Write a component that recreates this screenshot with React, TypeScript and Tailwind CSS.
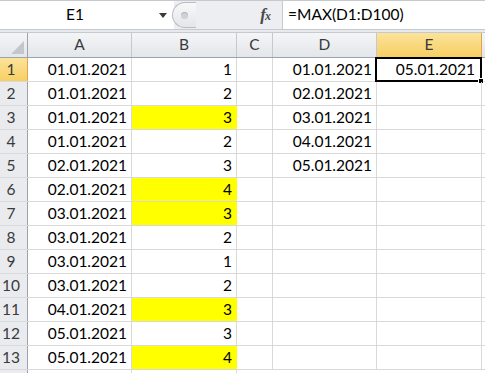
import * as React from "react";

const ROWS: { a: string; b: number; hi?: boolean; d?: string; e?: string }[] = [
  { a: "01.01.2021", b: 1, d: "01.01.2021", e: "05.01.2021" },
  { a: "01.01.2021", b: 2, d: "02.01.2021" },
  { a: "01.01.2021", b: 3, hi: true, d: "03.01.2021" },
  { a: "01.01.2021", b: 2, d: "04.01.2021" },
  { a: "02.01.2021", b: 3, d: "05.01.2021" },
  { a: "02.01.2021", b: 4, hi: true },
  { a: "03.01.2021", b: 3, hi: true },
  { a: "03.01.2021", b: 2 },
  { a: "03.01.2021", b: 1 },
  { a: "03.01.2021", b: 2 },
  { a: "04.01.2021", b: 3, hi: true },
  { a: "05.01.2021", b: 3 },
  { a: "05.01.2021", b: 4, hi: true },
];

const COLS = [
  { key: "A", w: "w-[104px]" },
  { key: "B", w: "w-[105px]" },
  { key: "C", w: "w-[36px]" },
  { key: "D", w: "w-[104px]" },
  { key: "E", w: "w-[105px]" },
];

function FormulaBar() {
  return (
    <div className="flex h-[30px] border-t border-b border-[#c6c9ce] bg-white">
      {/* Name box */}
      <div className="relative flex w-[174px] flex-none items-center justify-center">
        <span className="pr-[24px] text-[15.5px]">E1</span>
        <span className="absolute right-[7px] top-[12px] h-0 w-0 border-x-[4px] border-t-[5px] border-x-transparent border-t-[#3a3a3a]" />
      </div>
      {/* splitter + fx */}
      <div className="flex w-[108px] flex-none items-center bg-[#eceef1]">
        <div className="-ml-[2px] flex h-[26px] w-[24px] items-center justify-center rounded-l-full border border-r-0 border-[#b9bdc3] bg-gradient-to-b from-[#f7f8f9] to-[#e3e6ea]">
          <span className="h-[7px] w-[7px] rounded-full bg-[#cfd3d8] shadow-[inset_0_1px_1px_#aeb3b9]" />
        </div>
        <div className="flex-1" />
        <span className="mr-[12px] font-['Liberation_Serif',serif] text-[17px] font-bold italic tracking-[-1px] text-[#4a4a4a]">
          f<span className="text-[12px]">x</span>
        </span>
      </div>
      {/* Formula input */}
      <div className="flex flex-1 items-center border-l border-[#c6c9ce] pl-[5px] text-[15.5px]">
        =MAX(D1:D100)
      </div>
    </div>
  );
}

function HeaderRow() {
  return (
    <div className="flex h-[25px] border-b border-[#9da3ab]">
      <div className="relative w-[28px] flex-none border-r border-[#9da3ab] bg-gradient-to-b from-[#f4f5f7] to-[#e3e6ea]">
        <span className="absolute bottom-[3px] right-[3px] h-0 w-0 border-b-[13px] border-l-[13px] border-b-[#c3c7cc] border-l-transparent" />
      </div>
      {COLS.map((c) =>
        c.key === "E" ? (
          <div
            key={c.key}
            className={`${c.w} flex flex-none items-center justify-center border-r border-[#e0a54a] bg-gradient-to-b from-[#fbe39a] to-[#f7cf62] text-[#3a3a3a]`}
          >
            {c.key}
          </div>
        ) : (
          <div
            key={c.key}
            className={`${c.w} flex flex-none items-center justify-center border-r border-[#c5c9ce] bg-gradient-to-b from-[#f4f5f7] to-[#e3e6ea] text-[#3a3a3a]`}
          >
            {c.key}
          </div>
        ),
      )}
      <div className="flex-1 bg-gradient-to-b from-[#f4f5f7] to-[#e3e6ea]" />
    </div>
  );
}

function Cell({
  w,
  children,
  yellow,
}: {
  w: string;
  children?: React.ReactNode;
  yellow?: boolean;
}) {
  return (
    <div
      className={`${w} flex flex-none items-center justify-end border-r pr-[4px] ${
        yellow ? "border-[#ffff00] bg-[#ffff00]" : "border-[#d9d9d9] bg-white"
      }`}
    >
      {children}
    </div>
  );
}

export default function App() {
  return (
    <div className="h-[373px] w-[485px] overflow-hidden bg-white font-['Lato','Liberation_Sans',sans-serif] text-[15.5px] text-black">
      <FormulaBar />
      <div className="h-[3px] border-b border-[#c6c9ce] bg-[#e6e9ed]" />
      <HeaderRow />
      {ROWS.map((r, i) => (
        <div key={i} className="flex h-[24px] border-b border-[#d9d9d9]">
          <div
            className={`flex w-[28px] flex-none items-center justify-center border-r pr-[5px] ${
              i === 0
                ? "border-[#e0a54a] bg-gradient-to-b from-[#fbe39a] to-[#f7cf62]"
                : "border-[#9da3ab] bg-[#e9ebee]"
            } text-[#3a3a3a]`}
          >
            {i + 1}
          </div>
          <Cell w="w-[104px]">{r.a}</Cell>
          <Cell w="w-[105px]" yellow={r.hi}>
            {r.b}
          </Cell>
          <Cell w="w-[36px]" />
          <Cell w="w-[104px]">{r.d}</Cell>
          <div className="relative flex w-[105px] flex-none items-center justify-end border-r border-[#d9d9d9] pr-[6px]">
            {r.e}
            {i === 0 && (
              <>
                <span className="pointer-events-none absolute -left-[2px] -right-[1px] -top-[1px] -bottom-[1px] border-2 border-black" />
                <span className="absolute -bottom-[3px] -right-[3px] h-[6px] w-[6px] border border-white bg-black" />
              </>
            )}
          </div>
          <div className="flex-1" />
        </div>
      ))}
      <div className="flex h-[24px]">
        <div className="w-[28px] flex-none border-r border-[#9da3ab] bg-[#e9ebee]" />
        <div className="w-[104px] flex-none border-r border-[#d9d9d9]" />
        <div className="w-[105px] flex-none border-r border-[#d9d9d9]" />
      </div>
    </div>
  );
}
